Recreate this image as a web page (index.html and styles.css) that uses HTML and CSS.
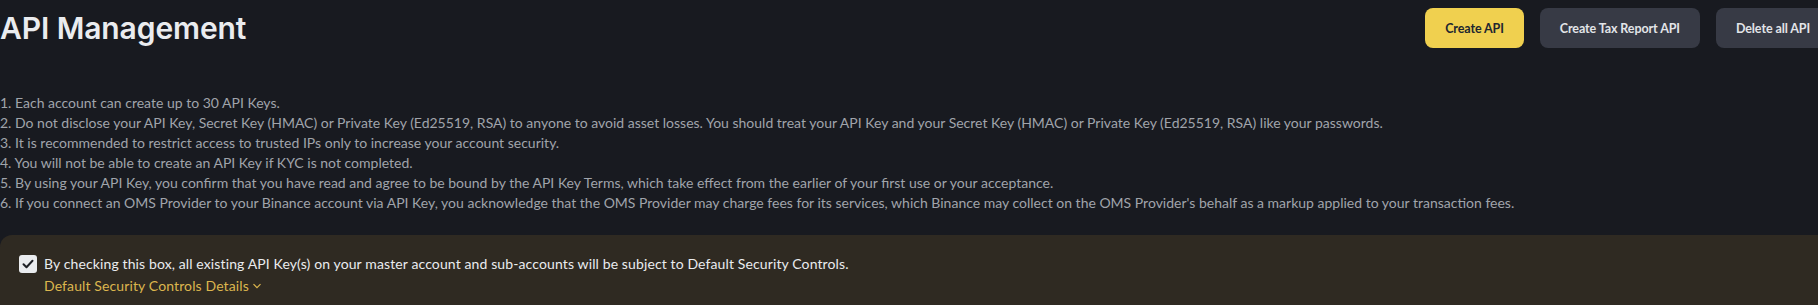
FILE: index.html
```html
<!DOCTYPE html>
<html lang="en">
<head>
<meta charset="utf-8">
<title>API Management</title>
<link rel="stylesheet" href="styles.css">
</head>
<body>
<div class="page">
  <header class="header">
    <h1 class="title">API Management</h1>
    <div class="actions">
      <button class="btn btn-primary">Create API</button>
      <button class="btn btn-secondary">Create Tax Report API</button>
      <button class="btn btn-secondary">Delete all API</button>
    </div>
  </header>
  <ol class="notes">
    <li>1. Each account can create up to 30 API Keys.</li>
    <li>2. Do not disclose your API Key, Secret Key (HMAC) or Private Key (Ed25519, RSA) to anyone to avoid asset losses. You should treat your API Key and your Secret Key (HMAC) or Private Key (Ed25519, RSA) like your passwords.</li>
    <li>3. It is recommended to restrict access to trusted IPs only to increase your account security.</li>
    <li>4. You will not be able to create an API Key if KYC is not completed.</li>
    <li>5. By using your API Key, you confirm that you have read and agree to be bound by the API Key Terms, which take effect from the earlier of your first use or your acceptance.</li>
    <li>6. If you connect an OMS Provider to your Binance account via API Key, you acknowledge that the OMS Provider may charge fees for its services, which Binance may collect on the OMS Provider's behalf as a markup applied to your transaction fees.</li>
  </ol>
  <section class="banner">
    <div class="check-row">
      <span class="checkbox">
        <svg viewBox="0 0 18 18" width="18" height="18"><path d="M4.5 9.2l3 3 6-6.4" fill="none" stroke="#1e2026" stroke-width="2" stroke-linecap="round" stroke-linejoin="round"/></svg>
      </span>
      <div class="check-text">
        <p class="check-label">By checking this box, all existing API Key(s) on your master account and sub-accounts will be subject to Default Security Controls.</p>
        <a class="details">Default Security Controls Details
          <svg viewBox="0 0 10 10" width="10" height="10"><path d="M1.5 3.2l3.5 3.5 3.5-3.5" fill="none" stroke="currentColor" stroke-width="1.2"/></svg>
        </a>
      </div>
    </div>
  </section>
</div>
</body>
</html>
```
FILE: styles.css
```css
html, body {
  margin: 0;
  padding: 0;
  background: #181a20;
  overflow: hidden;
}
body {
  font-family: Lato, "Noto Sans", sans-serif;
}
.page {
  width: 1830px;
}
.header {
  display: flex;
  justify-content: space-between;
  align-items: center;
  height: 56px;
}
.title {
  margin: 0;
  font-family: Inter, sans-serif;
  font-size: 30px;
  font-weight: 600;
  color: #eaecef;
  letter-spacing: -0.1px;
}
.actions {
  display: flex;
  gap: 16px;
}
.btn {
  height: 40px;
  padding: 0 20px;
  border: none;
  border-radius: 8px;
  font-family: Lato, sans-serif;
  font-size: 12.5px;
  font-weight: 700;
  letter-spacing: -0.1px;
}
.btn-primary {
  background: #f0d04f;
  color: #202630;
}
.btn-secondary {
  background: #373a45;
  color: #e2e4e8;
}
.notes {
  list-style: none;
  margin: 37px 0 0;
  padding: 0;
  font-size: 14px;
  line-height: 20px;
  color: #a0a4ab;
}
.banner {
  margin-top: 22px;
  background: #2f2a22;
  border-radius: 12px 12px 0 0;
  padding: 18px 19px 20px;
}
.check-row {
  display: flex;
  gap: 7px;
}
.checkbox {
  flex: none;
  width: 18px;
  height: 18px;
  margin-top: 2px;
  border-radius: 3px;
  background: #eaecef;
  display: flex;
}
.check-label {
  margin: 0;
  font-size: 14px;
  line-height: 22px;
  color: #eaecef;
  letter-spacing: 0.12px;
}
.details {
  display: inline-flex;
  align-items: center;
  gap: 3px;
  font-size: 14px;
  line-height: 22px;
  color: #dcb64e;
  letter-spacing: 0.12px;
}
```
